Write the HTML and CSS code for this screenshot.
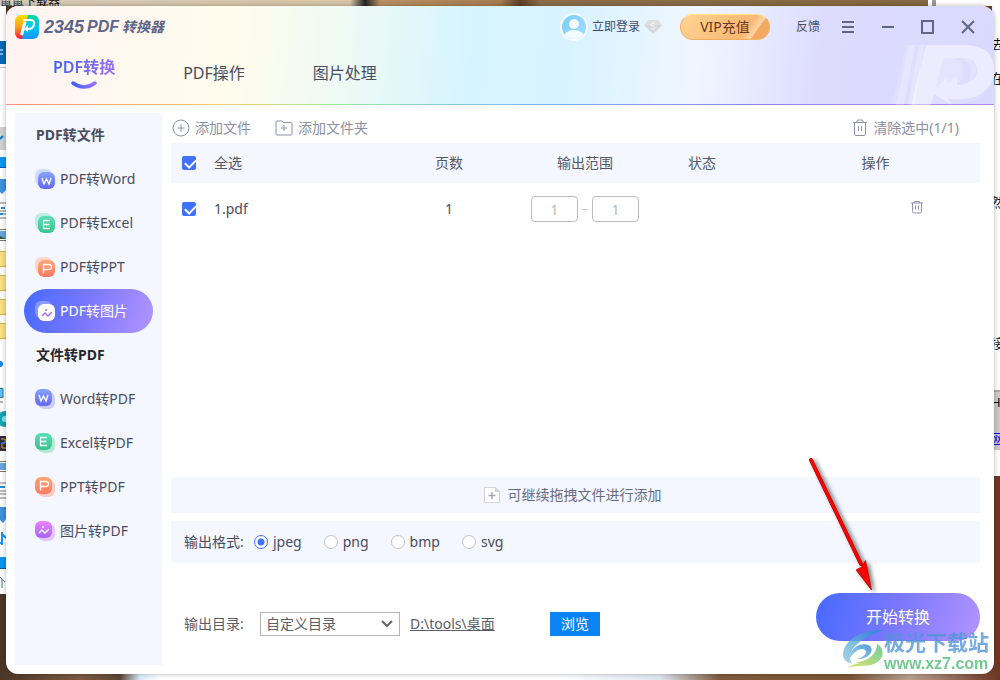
FILE: index.html
```html
<!DOCTYPE html>
<html lang="zh-CN">
<head>
<meta charset="utf-8">
<title>2345PDF转换器</title>
<link rel="stylesheet" href="styles.css">
</head>
<body>
<div class="desktop" aria-hidden="true">
  <span class="desk-title">鼠鼠下载器</span>
  <svg class="desk-left" width="6" height="680" viewBox="0 0 6 680">
    <rect y="6" width="6" height="588" fill="#fff"/>
    <rect y="41" width="6" height="23" fill="#0067b8"/>
    <path d="M0 50h3M0 54h3" stroke="#fff"/>
    <path d="M0 67.500h6" stroke="#ccc"/>
    <rect y="127" width="6" height="23" fill="#d0d0d0"/>
    <path d="M0 139l3-3" stroke="#0078d4" stroke-width="2"/>
    <rect y="157" width="6" height="11" fill="#0a96f0"/><rect y="167" width="6" height="1" fill="#035a9c"/>
    <path d="M0 179h6v11l-4 4l-2-2z" fill="#3d8fdd"/>
    <path d="M0 203h6M0 218h6M0 214h6M0 211h6" stroke="#777"/><path d="M1 208h4M0 214h3" stroke="#1e8bd8" stroke-width="2"/>
    <path d="M0 229.500h6M0 240.500h6" stroke="#777"/><rect y="231" width="6" height="8" fill="#67a4df"/><path d="M0 236l6 3H0z" fill="#28623f"/>
    <g fill="#fbdf83" stroke="#d9b44d"><path d="M-1 251.500h8v15h-8zM-1 275.500h8v15h-8zM-1 299.500h8v15h-8zM-1 323.500h8v15h-8z"/></g>
    <circle cx="0" cy="364" r="3" fill="#1681e0"/>
    <path d="M0 389h3v9H0z" fill="#58c6f5"/><path d="M0 388.500h3v9H0M0 402h3" stroke="#476a8a" fill="none"/>
    <circle cx="5" cy="419" r="8" fill="#12a3b4"/><circle cx="5" cy="419" r="3" fill="#8be4ea"/>
    <rect y="436" width="6" height="15" fill="#302c3b"/><path d="M1 439h4v4H2v5h4" stroke="#e8a42f" fill="none"/><path d="M2 443h3" stroke="#2a77dd" stroke-width="2"/>
    <path d="M0 461.500h6M0 471.500h6" stroke="#777"/><rect y="463" width="6" height="7" fill="#67a4df"/>
    <path d="M0 483h6M0 498h6M0 494h6M0 491h6" stroke="#777"/><path d="M0 487h5" stroke="#1e8bd8" stroke-width="2"/>
    <path d="M0 507h6v12l-3 4l-3-3z" fill="#3d8fdd"/>
    <path d="M2 532v13M2 534l4 4M0 543h3" stroke="#1695ef" stroke-width="2" fill="none"/>
    <rect y="557" width="6" height="12" fill="#0a96f0"/><rect y="568" width="6" height="1" fill="#035a9c"/>
    <path d="M0 577l5 5M2 579v9" stroke="#466d9b" fill="none"/>
  </svg>
  <div class="desk-right">
    <span class="desk-word w1">去</span><span class="desk-word w2">在</span><span class="desk-word w3">然</span><span class="desk-word w4">接</span>
    <span class="desk-status"><span class="desk-word w5">HT</span><span class="desk-word w6">网</span></span>
  </div>
</div>

<div class="window">
  <header class="header">
    <svg class="header-art" width="104" height="60" viewBox="0 0 104 60" aria-hidden="true">
      <path d="M16 0h57q30 0 31 24v8q-6 24-34 27H2z" fill="#fff" opacity=".12"/>
      <path d="M25 0h-6L6 60h8zM34 0h-5L18 60h7z" fill="#fff" opacity=".22"/>
      <path fill-rule="evenodd" d="M36 0h37c23 0 32 10 31 27c-2 17-15 27-33 27H58l4 6-18-11-3 11H21zM53 13L46 42l11-9v6l10-8v9c12-1 20-5 20-15c0-8-5-12-14-12z" fill="#fff" opacity=".42"/>
      <path d="M53 13h12q8 3 8 13t-6 13v-8l-10 8v-6l-11 9zM71 13h6q9 3 9 12t-9 14q4-6 4-14t-10-12z" fill="#fff" opacity=".2"/>
    </svg>
    <div class="titlebar">
      <div class="brand">
        <svg width="24" height="24" viewBox="0 0 24 24" aria-hidden="true">
          <defs>
            <linearGradient id="lg-a" x1="0" y1="0" x2="0" y2="1"><stop offset="0" stop-color="#ffe000"/><stop offset=".5" stop-color="#ffa01c"/><stop offset="1" stop-color="#fb1340"/></linearGradient>
            <linearGradient id="lg-b" x1="0" y1="0" x2="0" y2="1"><stop offset="0" stop-color="#00d99b"/><stop offset=".5" stop-color="#06c7f2"/><stop offset="1" stop-color="#1593ff"/></linearGradient>
            <clipPath id="lg-c"><rect width="24" height="24" rx="6"/></clipPath>
          </defs>
          <g clip-path="url(#lg-c)"><path d="M0 0h15L8 24H0z" fill="url(#lg-a)"/><path d="M13 0h11v24H7z" fill="url(#lg-b)"/></g>
          <path d="M6.500 20L10 7" stroke="#fff" stroke-width="3" fill="none"/>
          <path d="M8 5h7q5 0 4 4.500q-1 4.500-6 4.500h-1" stroke="#fff" stroke-width="2" fill="none"/><path d="M9 14l4-4v7z" fill="#fff"/>
        </svg>
        <h1 class="brand-name"><span class="brand-num">2345</span><span class="brand-pdf">PDF</span><span class="brand-cn">转换器</span></h1>
      </div>
      <div class="account">
        <button class="login" type="button">
          <svg width="28" height="28" viewBox="0 0 28 28" aria-hidden="true">
            <defs><linearGradient id="av" x1="0" y1="0" x2="1" y2="1"><stop offset="0" stop-color="#76cdfb"/><stop offset="1" stop-color="#a9dcff"/></linearGradient><clipPath id="av-c"><circle cx="14" cy="14" r="12"/></clipPath></defs>
            <circle cx="14" cy="14" r="14" fill="#f4fcff"/><circle cx="14" cy="14" r="12" fill="url(#av)"/>
            <g fill="#f4fbff" clip-path="url(#av-c)"><circle cx="14" cy="11" r="5"/><ellipse cx="14" cy="24" rx="10" ry="7"/></g>
          </svg>
          <span>立即登录</span>
          <svg width="18" height="14" viewBox="0 0 18 14" aria-hidden="true"><path d="M4 0h10l4 5-9 9-9-9z" fill="#dedede"/><path d="M0 5h18l-9 9z" fill="#d5d7d8"/><path d="M11 3H8q-2 2 0 3h2q2 2 0 3H7" fill="none" stroke="#f5f5f5"/></svg>
        </button>
        <button class="vip" type="button">VIP充值</button>
        <button class="feedback" type="button">反馈</button>
      </div>
      <div class="controls">
        <button type="button" aria-label="菜单"><svg width="14" height="14" viewBox="0 0 14 14"><path d="M1 2h12M1 7h12M1 12h12"/></svg></button>
        <button type="button" aria-label="最小化"><svg width="14" height="14" viewBox="0 0 14 14"><path d="M1 7h12"/></svg></button>
        <button type="button" aria-label="最大化"><svg width="14" height="14" viewBox="0 0 14 14"><path d="M1 1h11v12H1z"/></svg></button>
        <button type="button" aria-label="关闭"><svg width="14" height="14" viewBox="0 0 14 14"><path d="M1 1l12 12M13 1L1 13"/></svg></button>
      </div>
    </div>
    <nav class="tabs">
      <a class="tab active" href="#convert"><span>PDF转换</span>
        <svg width="28" height="9" viewBox="0 0 28 9" aria-hidden="true"><defs><linearGradient id="sm"><stop stop-color="#3f62fb"/><stop offset="1" stop-color="#9b71fa"/></linearGradient></defs><path d="M3 2q11 8 22 0" fill="none" stroke="url(#sm)" stroke-width="3.500" stroke-linecap="round"/></svg>
      </a>
      <a class="tab" href="#operate">PDF操作</a>
      <a class="tab" href="#image">图片处理</a>
    </nav>
  </header>

  <svg class="defs" width="0" height="0" aria-hidden="true">
    <defs>
      <linearGradient id="g-w" x1="0" y1="0" x2="0" y2="1"><stop stop-color="#86a5fc"/><stop offset="1" stop-color="#6665ee"/></linearGradient>
      <linearGradient id="g-e" x1="0" y1="0" x2="0" y2="1"><stop stop-color="#59ddb5"/><stop offset="1" stop-color="#36c48d"/></linearGradient>
      <linearGradient id="g-p" x1="0" y1="0" x2="0" y2="1"><stop stop-color="#ffa673"/><stop offset="1" stop-color="#ff7960"/></linearGradient>
      <linearGradient id="g-i" x1="0" y1="0" x2="0" y2="1"><stop stop-color="#ed83fc"/><stop offset="1" stop-color="#a963f6"/></linearGradient>
      <path id="s-w" d="M4 6l2 6 2.500-5 2.500 5 2-6"/>
      <path id="s-e" d="M12 4.500H5.500v8H12M5.500 8.500h6"/>
      <path id="s-p" d="M5.500 13.500v-9h5q3 0 3 2.500t-3 2.500h-5"/>
      <path id="s-i" d="M4 12l3-3 3 3 4-4"/>
    </defs>
  </svg>

  <div class="body">
    <aside class="sidebar">
      <h2 class="group">PDF转文件</h2>
      <a class="item" href="#w"><svg width="20" height="20"><rect width="17" height="17" rx="6" fill="#cfdcfd"/><rect x="3" y="3" width="17" height="17" rx="6" fill="url(#g-w)"/><use class="mark" href="#s-w" x="3" y="3"/></svg>PDF转Word</a>
      <a class="item" href="#e"><svg width="20" height="20"><rect width="17" height="17" rx="6" fill="#bdeee1"/><rect x="3" y="3" width="17" height="17" rx="6" fill="url(#g-e)"/><use class="mark" href="#s-e" x="3" y="3"/></svg>PDF转Excel</a>
      <a class="item" href="#p"><svg width="20" height="20"><rect width="17" height="17" rx="6" fill="#fad7cb"/><rect x="3" y="3" width="17" height="17" rx="6" fill="url(#g-p)"/><use class="mark" href="#s-p" x="3" y="3"/></svg>PDF转PPT</a>
      <a class="item selected" href="#i"><svg width="20" height="20"><rect width="17" height="17" rx="6" fill="#fff" opacity=".3"/><rect x="3" y="3" width="17" height="17" rx="6" fill="#fff"/><use class="mark-purple" href="#s-i" x="3" y="3"/><circle cx="11" cy="9" r="1" fill="#a963f6"/></svg>PDF转图片</a>
      <h2 class="group dark">文件转PDF</h2>
      <a class="item" href="#w2"><svg width="20" height="20"><rect x="3" y="3" width="17" height="17" rx="6" fill="#cdccfa"/><rect width="17" height="17" rx="6" fill="url(#g-w)"/><use class="mark" href="#s-w"/></svg>Word转PDF</a>
      <a class="item" href="#e2"><svg width="20" height="20"><rect x="3" y="3" width="17" height="17" rx="6" fill="#b5e9d6"/><rect width="17" height="17" rx="6" fill="url(#g-e)"/><use class="mark" href="#s-e"/></svg>Excel转PDF</a>
      <a class="item" href="#p2"><svg width="20" height="20"><rect x="3" y="3" width="17" height="17" rx="6" fill="#fccbc7"/><rect width="17" height="17" rx="6" fill="url(#g-p)"/><use class="mark" href="#s-p"/></svg>PPT转PDF</a>
      <a class="item" href="#i2"><svg width="20" height="20"><rect x="3" y="3" width="17" height="17" rx="6" fill="#e4c6fc"/><rect width="17" height="17" rx="6" fill="url(#g-i)"/><use class="mark" href="#s-i"/><circle cx="8" cy="6" r="1" fill="#fff"/></svg>图片转PDF</a>
    </aside>

    <main class="main">
      <div class="toolbar">
        <button type="button"><svg width="18" height="18" viewBox="0 0 18 18"><circle cx="9" cy="9" r="8"/><path d="M9 5.500v7M5.500 9h7"/></svg>添加文件</button>
        <button type="button"><svg width="18" height="18" viewBox="0 0 18 18"><path d="M1 15V3q0-1 1-1h5l1 1.500h8q1 0 1 1V15q0 1-1 1H2q-1 0-1-1zM9 6v6M6 9h6"/></svg>添加文件夹</button>
        <button class="clear" type="button"><svg width="16" height="18" viewBox="0 0 16 18"><path d="M1 3.500h14M5 3.500V2q0-1 1-1h4q1 0 1 1v1.500M2.500 3.500V15q0 1.500 1.500 1.500h8q1.500 0 1.500-1.500V3.500M6.500 7v5M9.500 7v5"/></svg>清除选中(1/1)</button>
      </div>
      <div class="files">
        <table>
          <colgroup><col class="c-check"><col><col class="c-pages"><col class="c-range"><col class="c-state"><col class="c-act"></colgroup>
          <thead><tr>
            <th><input id="all" type="checkbox" checked></th><th class="name"><label for="all">全选</label></th><th>页数</th><th>输出范围</th><th>状态</th><th class="act-h">操作</th>
          </tr></thead>
          <tbody><tr>
            <td><input id="f1" type="checkbox" checked></td><td class="name"><label for="f1">1.pdf</label></td><td>1</td>
            <td><div class="range"><input type="text" value="1" aria-label="起始页"><span></span><input type="text" value="1" aria-label="结束页"></div></td>
            <td></td>
            <td class="act"><button type="button" aria-label="删除"><svg width="12" height="14" viewBox="0 0 12 14"><path d="M0 3h12M3.500 3V1.500h5V3M1.500 3v8.500q0 1.500 1.500 1.500h6q1.500 0 1.500-1.500V3M4.500 5.500v4M7.500 5.500v4"/></svg></button></td>
          </tr></tbody>
        </table>
      </div>
      <button class="dropbar" type="button"><svg width="16" height="16" viewBox="0 0 16 16"><path d="M11 .5H.5v15h15V4z" fill="#fff" stroke="#d3d3d6"/><path d="M11 0v5h5z" fill="#d3d3d6"/><path d="M8 5v7M4.500 8.500h7" stroke="#a5a6ad" stroke-width="1.500"/></svg>可继续拖拽文件进行添加</button>
      <div class="formats" role="radiogroup" aria-labelledby="fmt-label">
        <span id="fmt-label">输出格式:</span>
        <label><input type="radio" name="fmt" checked>jpeg</label>
        <label><input type="radio" name="fmt">png</label>
        <label><input type="radio" name="fmt">bmp</label>
        <label><input type="radio" name="fmt">svg</label>
      </div>
      <div class="footer">
        <div class="output">
          <label for="dir">输出目录:</label>
          <select id="dir"><option>自定义目录</option></select>
          <a class="path" href="#dir">D:\tools\桌面</a>
          <button class="browse" type="button">浏览</button>
        </div>
        <button class="start" type="button">开始转换</button>
      </div>
    </main>
  </div>
</div>

<svg class="arrow" width="90" height="150" viewBox="0 0 90 150" aria-hidden="true">
  <path d="M11 10L61 114" stroke="#a00000" stroke-width="4" stroke-linecap="round"/>
  <path d="M11 10L61 114" stroke="#f00" stroke-width="3" stroke-linecap="round"/>
  <path d="M56 120l5.500-3 4-6.500L71.500 140z" fill="#f00" stroke="#b00000" stroke-width=".7"/>
</svg>
<div class="watermark">
  <svg width="42" height="42" viewBox="0 0 42 42" aria-hidden="true">
    <defs>
      <linearGradient id="wm-a" x1="0" y1="1" x2="1" y2="0"><stop stop-color="#8fcbdc"/><stop offset="1" stop-color="#2585d6"/></linearGradient>
      <linearGradient id="wm-b" x1="0" y1="1" x2="1" y2="0"><stop stop-color="#d2df45"/><stop offset="1" stop-color="#4fc08a"/></linearGradient>
    </defs>
    <path d="M42 1C22 0 2 10 1 25c0 6 4 9 9 9c-6-8 1-23 32-33z" fill="url(#wm-a)"/>
    <path d="M7 31C7 18 21 12 28 17c5 5-2 14-14 13c7-1 12-6 9-9c-4-3-12 2-16 10z" fill="url(#wm-a)"/>
    <path d="M14 33c10 0 21-7 21-18c7 3 9 15-3 20c-8 3-19 1-26 4c3-3 8-5 14-4q-4 0-6-2z" fill="url(#wm-b)"/>
  </svg>
  <div class="wm-text"><span class="wm-cn">极光下载站</span><span class="wm-url">www.xz7.com</span></div>
</div>
</body>
</html>
```

FILE: styles.css
```css
* { box-sizing: border-box; }

body {
  margin: 0;
  min-height: 100vh;
  padding: 6px;
  display: flex;
  position: relative;
  overflow: hidden;
  font-family: "Noto Sans", "Noto Sans CJK SC", sans-serif;
  font-size: 14px;
  line-height: 20px;
  color: #4a4c5e;
}

button, input, select { font: inherit; color: inherit; }
button { border: 0; padding: 0; background: none; }
a { color: inherit; text-decoration: none; }
h1, h2 { margin: 0; }
svg { flex: none; display: block; }
.defs { position: absolute; }

/* desktop behind the window */
.desktop {
  position: absolute;
  inset: 0;
  z-index: -1;
  overflow: hidden;
  background: linear-gradient(90deg, #4b3524 0, #7d5a40 8%, #5d4634 12%, #d8edfa 14%, #fff 16%, #fff 56%, #dfe6f3 66%, #7f5a3c 72%, #7b5535 85%, #b9a092 91%, #6d3521 100%);
}
.desktop::before {
  content: "";
  position: absolute;
  inset: 0 0 auto;
  height: 6px;
  background: linear-gradient(90deg, #d5cab8 0, #d9c5a6 35%, #1f2426 36.500%, #b98f62 38%, #a67c52 50%, #5f3d26 52%, #8b6d4a 54%, #86683f 92.800%, #fff 92.800%, #fff 93.200%, #999 93.200%, #999 93.600%, #fff 93.600%);
}
.desk-title { position: absolute; left: 0; top: -6px; font-size: 12px; line-height: 16px; color: #111; }
.desk-left { position: absolute; left: 0; top: 0; }
.desk-right {
  position: absolute;
  right: 0;
  top: 0;
  width: 8px;
  height: 476px;
  overflow: hidden;
  background: #fff;
}
.desk-status {
  position: absolute;
  inset: 390px 0 auto;
  height: 60px;
  background: #c9c9c9;
  border-top: 2px solid #aaa;
}
.desk-word { position: absolute; left: -1px; font-size: 13px; line-height: 16px; color: #111; }
.w1 { top: 36px; }
.w2 { top: 70px; }
.w3 { top: 194px; }
.w4 { top: 335px; }
.w5 { top: 2px; }
.w6 { top: 38px; color: #11e; text-decoration: underline; }

.window {
  flex: 1;
  min-width: 0;
  display: flex;
  flex-direction: column;
  background: #fff;
  border-radius: 12px;
  box-shadow: 0 0 5px rgba(0, 0, 0, .3);
  overflow: hidden;
}

.header {
  position: relative;
  height: 99px;
  border-bottom: 1px solid;
  border-image: linear-gradient(90deg, #ff8c84, #ffc77a 20%, #9be9a0 34%, #7fb0f8 54%, #8f83ee 76%, #b884f2) 1;
  background: linear-gradient(96deg, #fff3f1 0, #fff9f0 14%, #fffcec 23%, #eefaf4 34%, #d6f4ff 47%, #d8f3ff 57%, #f0f6ff 70%, #dddcff 82%, #d9d9ff 100%);
}
.header-art { position: absolute; right: 0; top: 39px; }
.titlebar { height: 42px; display: flex; align-items: center; padding: 0 19px 0 9px; }
.brand { display: flex; align-items: center; gap: 5px; flex: 1; }
.brand-name {
  display: flex;
  align-items: center;
  gap: 3px;
  font: italic 700 18px/20px "Liberation Sans", "Noto Sans CJK SC", sans-serif;
  color: #5d6688;
}
.brand-pdf { font-size: 16px; }
.brand-cn { font-size: 14px; }
.account { display: flex; align-items: center; }
.login { display: flex; align-items: center; gap: 4px; font-size: 12px; color: #434b75; }
.vip {
  width: 90px;
  height: 26px;
  margin: 0 26px 0 18px;
  border-radius: 13px;
  border: 1px solid #f3ad63;
  border-top-color: #ffe48e;
  background: linear-gradient(125deg, #ffd391 0, #f7b873 72%, #fcd6a7 82%, #f3a961 83%);
  color: #6d3923;
}
.feedback { font-size: 12px; }
.controls { display: flex; gap: 26px; padding-left: 21px; position: relative; }
.controls svg { fill: none; stroke: #606783; stroke-width: 2; }

.tabs { display: flex; gap: 68px; padding: 6px 47px 0; font-size: 16px; line-height: 22px; }
.tab { padding-top: 8px; }
.tab.active { padding-top: 2px; display: flex; flex-direction: column; align-items: center; gap: 3px; font-weight: 600; color: #5567fb; }
.tab.active span { background: linear-gradient(90deg, #3f5efb, #9b71fa); background-clip: text; color: transparent; }

.body { flex: 1; display: flex; padding: 8px 14px 9px 9px; gap: 9px; }
.sidebar { width: 147px; padding: 0 9px; background: #f4f7ff; }
.group { height: 44px; padding-left: 12px; font-size: 14px; line-height: 44px; font-weight: 700; }
.group.dark { color: #272727; }
.item { height: 44px; display: flex; align-items: center; gap: 5px; padding-left: 11px; border-radius: 22px; }
.item.selected { background: linear-gradient(105deg, #466aff, #7c78fd 50%, #b294ff); color: #fff; }
.mark { fill: none; stroke: #fff; stroke-width: 1.300; }
.mark-purple { fill: none; stroke: #a963f6; stroke-width: 1.300; }

.main { flex: 1; min-width: 0; display: flex; flex-direction: column; }
.toolbar { display: flex; align-items: center; gap: 24px; height: 30px; padding: 0 21px 0 1px; color: #8c90a1; }
.toolbar button { display: flex; align-items: center; gap: 5px; }
.toolbar .clear { margin-left: auto; }
.toolbar svg, .act svg { fill: none; stroke: #8c90a8; }

.files { flex: 1; }
table { width: 100%; table-layout: fixed; border-collapse: collapse; }
.c-check { width: 36px; }
.c-pages { width: 116px; }
.c-range { width: 156px; }
.c-state { width: 78px; }
.c-act { width: 239px; }
th, td { padding: 0; text-align: center; font-weight: 400; vertical-align: middle; }
th { height: 40px; background: #f4f7ff; color: #555768; }
td { height: 52px; }
.name { text-align: left; padding-left: 7px; }
.act-h { padding-left: 30px; }
.act { padding-left: 112px; }
.act button { display: inline-block; }
input[type="checkbox"] {
  appearance: none;
  display: block;
  width: 14px;
  height: 14px;
  margin: 0 auto;
  border-radius: 2px;
  background: #4071ff;
}
input[type="checkbox"]::before {
  content: "";
  display: block;
  width: 9px;
  height: 5px;
  margin: 3px 0 0 3px;
  border: solid #fff;
  border-width: 0 0 2px 2px;
  transform: rotate(-45deg);
}
.range { display: flex; align-items: center; justify-content: center; gap: 4px; }
.range input {
  width: 47px;
  height: 26px;
  padding: 0;
  border: 1px solid #bdbdc0;
  border-radius: 4px;
  text-align: center;
  color: #b6b6ba;
  background: #fff;
}
.range span { width: 6px; height: 1px; background: #c9c9cc; }

.dropbar {
  height: 36px;
  display: flex;
  align-items: center;
  justify-content: center;
  gap: 8px;
  padding-right: 6px;
  background: #f4f7ff;
  color: #676b82;
}
.formats {
  margin-top: 8px;
  padding: 0 13px;
  height: 42px;
  display: flex;
  align-items: center;
  background: #f4f7ff;
}
.formats span { width: 70px; }
.formats label { display: flex; align-items: center; gap: 5px; margin-right: 22px; }
input[type="radio"] {
  appearance: none;
  width: 14px;
  height: 14px;
  margin: 0;
  border: 1px solid #c3c3c7;
  border-radius: 50%;
  background: #fff;
}
input[type="radio"]:checked { border-color: #4071ff; background: radial-gradient(circle, #4071ff 3px, #fff 4px); }

.footer { display: flex; align-items: center; justify-content: space-between; padding: 30px 0 24px 13px; }
.output { display: flex; align-items: center; padding-top: 14px; color: #5c5d66; }
.output label { width: 76px; }
select {
  appearance: none;
  width: 140px;
  height: 24px;
  padding: 0 5px;
  border: 1px solid #b4b4b4;
  border-radius: 0;
  background: #fff url("data:image/svg+xml,%3Csvg xmlns='http://www.w3.org/2000/svg' width='12' height='8'%3E%3Cpath d='M1 1l5 5 5-5' fill='none' stroke='%23666' stroke-width='2'/%3E%3C/svg%3E") no-repeat right 6px center;
}
.path { margin-left: 10px; width: 140px; text-decoration: underline; }
.browse { width: 50px; height: 24px; background: #0a83f5; color: #fff; }
.start {
  width: 164px;
  height: 48px;
  border-radius: 24px;
  background: linear-gradient(105deg, #466aff, #7c78fd 50%, #b294ff);
  color: #fff;
  font-size: 16px;
}

/* annotation and site mark over the window */
.arrow { position: absolute; right: 110px; bottom: 80px; fill: none; filter: drop-shadow(3px 2px 2px rgba(0, 0, 0, .55)); }
.watermark { position: absolute; right: 11px; bottom: 7px; display: flex; align-items: center; opacity: .8; }
.wm-text { display: flex; flex-direction: column; }
.wm-cn { font: 700 21px/28px "Noto Sans CJK SC", sans-serif; color: #5196d8; }
.wm-url { font: 700 16px/18px "Liberation Sans", sans-serif; color: #4fbd76; }
```
